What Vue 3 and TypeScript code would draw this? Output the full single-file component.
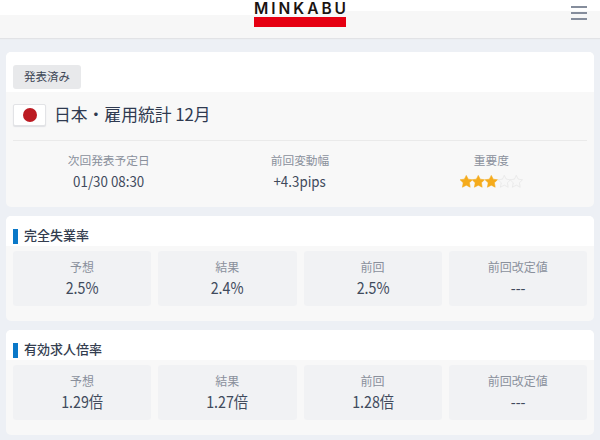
<script setup lang="ts">
type Stat = { label: string; value: string }
type Section = { title: string; stats: Stat[] }

const summary = [
  { label: '次回発表予定日', value: '01/30 08:30' },
  { label: '前回変動幅', value: '+4.3pips' },
]

const sections: Section[] = [
  {
    title: '完全失業率',
    stats: [
      { label: '予想', value: '2.5%' },
      { label: '結果', value: '2.4%' },
      { label: '前回', value: '2.5%' },
      { label: '前回改定値', value: '---' },
    ],
  },
  {
    title: '有効求人倍率',
    stats: [
      { label: '予想', value: '1.29倍' },
      { label: '結果', value: '1.27倍' },
      { label: '前回', value: '1.28倍' },
      { label: '前回改定値', value: '---' },
    ],
  },
]

const starPath = 'M6.5 0.2 8.5 4.1 12.9 4.7 9.7 7.8 10.5 12.4 6.5 10.3 2.5 12.4 3.3 7.8 0.1 4.7 4.5 4.1Z'
const stars = [true, true, true, false, false]
</script>

<template>
  <div class="page">
    <header class="header">
      <svg class="logo" width="92" height="28" viewBox="0 0 92 28">
        <text x="0" y="14.3" textLength="92" lengthAdjust="spacing" class="logo-text">MINKABU</text>
        <rect x="0" y="17" width="92" height="10" fill="#e60012" />
      </svg>
      <button class="menu" aria-label="menu">
        <span></span><span></span><span></span>
      </button>
    </header>

    <section class="card">
      <div class="card-top">
        <span class="badge">発表済み</span>
      </div>
      <div class="card-body">
        <div class="title-row">
          <span class="flag"><i></i></span>
          <h1>日本・雇用統計 12月</h1>
        </div>
        <div class="summary">
          <div class="summary-item" v-for="item in summary" :key="item.label">
            <div class="summary-label">{{ item.label }}</div>
            <div class="summary-value">{{ item.value }}</div>
          </div>
          <div class="summary-item">
            <div class="summary-label">重要度</div>
            <div class="stars">
              <svg v-for="(on, i) in stars" :key="i" width="12.6" height="13" viewBox="0 0 13 13">
                <path :d="starPath" :fill="on ? '#f5ab1c' : '#f7f7f7'" :stroke="on ? '#f5ab1c' : '#e2e2e2'" stroke-width="0.6" />
              </svg>
            </div>
          </div>
        </div>
      </div>
    </section>

    <section class="card" v-for="section in sections" :key="section.title">
      <div class="section-head">
        <h2>{{ section.title }}</h2>
      </div>
      <div class="stats">
        <div class="stat" v-for="stat in section.stats" :key="stat.label">
          <div class="stat-label">{{ stat.label }}</div>
          <div class="stat-value">{{ stat.value }}</div>
        </div>
      </div>
    </section>
  </div>
</template>

<style>
html,
body {
  margin: 0;
  background: #edf0f5;
}
</style>

<style scoped>
.page {
  height: 440px;
  overflow: hidden;
  background: #edf0f5;
  font-family: "Noto Sans CJK JP", sans-serif;
  color: #333d4f;
}

.header {
  position: relative;
  height: 38px;
  background:
    linear-gradient(#fff 15px, #f7f7f7 15px) left / 50% 100% no-repeat,
    linear-gradient(#fff 11px, #f7f7f7 11px) right / 50% 100% no-repeat;
  box-shadow: 0 1px 1px #e2e3e6;
  display: flex;
  justify-content: center;
  margin-bottom: 14px;
}

.logo-text {
  font-family: Inter, sans-serif;
  font-weight: 600;
  font-size: 15.5px;
  fill: #1a1311;
}

.menu {
  position: absolute;
  top: 6px;
  right: 13px;
  width: 16px;
  height: 14px;
  padding: 0;
  border: 0;
  background: none;
  display: flex;
  flex-direction: column;
  justify-content: space-between;
}

.menu span {
  display: block;
  height: 2px;
  background: #858d9c;
}

.card {
  margin: 0 6px 9px;
  border-radius: 5px;
  overflow: hidden;
  background: #f8f8f8;
}

.card-top {
  height: 40px;
  background: #fff;
  padding: 13px 7px 0;
  box-sizing: border-box;
}

.badge {
  display: block;
  width: 68px;
  height: 24px;
  line-height: 23px;
  text-align: center;
  background: #e8e9eb;
  border-radius: 3px;
  font-size: 11.5px;
  color: #3d4656;
}

.card-body {
  padding: 0 7px;
  height: 115px;
  box-sizing: border-box;
}

.title-row {
  height: 49px;
  display: flex;
  align-items: center;
  gap: 8px;
  border-bottom: 1px solid #eaeaea;
  padding-bottom: 5px;
  box-sizing: border-box;
}

.flag {
  width: 33px;
  height: 22px;
  margin-top: 2px;
  background: #fff;
  border: 1px solid #e2e3e6;
  box-shadow: 0 1px 1px #dfe0e4;
  border-radius: 2px;
  box-sizing: border-box;
  display: flex;
  align-items: center;
  justify-content: center;
}

.flag i {
  width: 14px;
  height: 14px;
  border-radius: 50%;
  background: #bc1a22;
}

h1 {
  margin: 0;
  font-size: 16.8px;
  font-weight: 400;
  color: #2f3a50;
}

.summary {
  display: grid;
  grid-template-columns: repeat(3, 1fr);
  padding-top: 10px;
  text-align: center;
}

.summary-label {
  font-size: 11.7px;
  line-height: 17px;
  color: #8a909c;
}

.summary-value {
  font-size: 14.5px;
  line-height: 20px;
  margin-top: 3px;
  color: #404a5c;
  transform: scaleX(0.92);
}

.stars {
  display: flex;
  justify-content: center;
  margin-top: 7px;
}

.section-head {
  height: 30px;
  background: #fff;
  padding: 13px 7px 0;
  box-sizing: border-box;
}

h2 {
  margin: 0;
  height: 15px;
  line-height: 12px;
  padding-left: 6px;
  border-left: 5px solid #0a78c8;
  font-size: 13px;
  font-weight: 500;
  color: #333d4f;
}

.stats {
  display: grid;
  grid-template-columns: repeat(4, 1fr);
  gap: 7px;
  padding: 5px 7px 15px;
}

.stat {
  height: 55px;
  background: #f1f2f4;
  border-radius: 3px;
  text-align: center;
  box-sizing: border-box;
  padding-top: 7px;
}

.stat-label {
  font-size: 12px;
  line-height: 18px;
  color: #8a909c;
}

.stat-value {
  font-size: 16px;
  line-height: 22px;
  color: #404a5c;
  transform: scaleX(0.89);
}
</style>
